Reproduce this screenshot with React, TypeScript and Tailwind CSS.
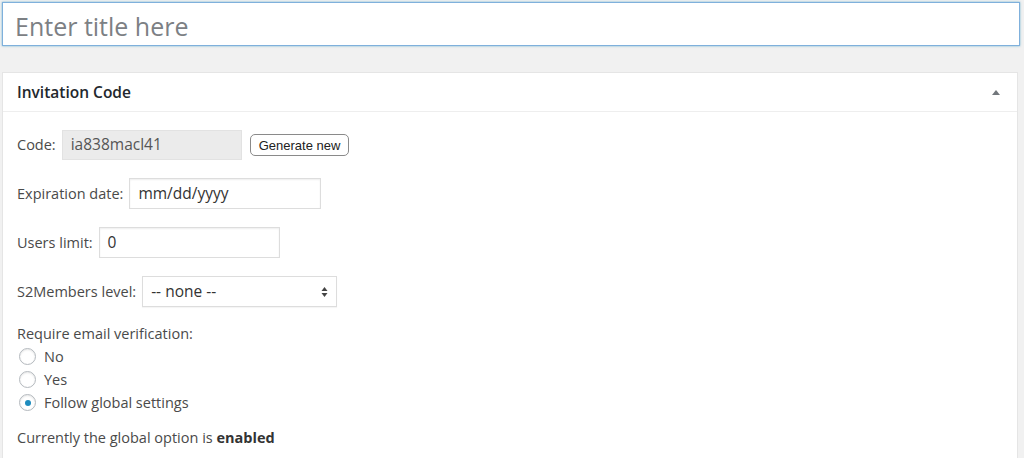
import { useState } from "react";

const font = { fontFamily: '"Open Sans", "Noto Sans", Arial, sans-serif' };

function Radio({ checked, label }: { checked?: boolean; label: string }) {
  return (
    <label className="flex h-[23px] items-center gap-[8px]">
      <span className="flex h-[17px] w-[17px] items-center justify-center rounded-full border border-[#b4b9be] bg-white shadow-[inset_0_1px_2px_rgba(0,0,0,0.1)]">
        {checked ? <span className="h-[6px] w-[6px] rounded-full bg-[#1e8cbe]" /> : null}
      </span>
      <span>{label}</span>
    </label>
  );
}

export default function App() {
  const [title, setTitle] = useState("");

  return (
    <div
      className="h-[458px] w-full overflow-hidden bg-[#f1f1f1] px-[2px] pt-[2px] text-[14.5px] text-[#4a4a4a]"
      style={font}
    >
      <input
        value={title}
        onChange={(e) => setTitle(e.target.value)}
        placeholder="Enter title here"
        className="block h-[44px] w-[1018px] border border-[#7fb0dc] bg-white px-[12px] pt-[3px] text-[25px] text-[#333] shadow-[0_0_2px_rgba(30,140,190,0.6)] outline-none placeholder:text-[#7c8084]"
      />

      <div className="mt-[26px] h-[420px] w-[1016px] border border-[#e5e5e5] bg-white">
        <div className="flex h-[39px] items-center justify-between border-b border-[#eee] pl-[14px] pr-[16px]">
          <div className="pt-[2px] text-[15.5px] font-semibold text-[#23282d]">Invitation Code</div>
          <svg width="10" height="8" viewBox="0 0 10 8">
            <path d="M1 7 L5 2 L9 7 Z" fill="#72777c" />
          </svg>
        </div>

        <div className="px-[14px] pt-[18px]">
          <div className="flex h-[30px] items-center gap-[6px]">
            <span>Code:</span>
            <div className="flex h-[30px] w-[180px] items-center border border-[#e2e2e2] bg-[#ebebeb] px-[8px] text-[15.5px] text-[#555]">
              ia838macl41
            </div>
            <button
              className="ml-[2px] h-[22px] rounded-[5px] border border-[#8a8a8a] bg-white px-[8px] text-[13px] leading-none text-[#222]"
              style={{ fontFamily: '"Liberation Sans", Arial, sans-serif' }}
            >
              Generate new
            </button>
          </div>

          <div className="mt-[18px] flex h-[31px] items-center gap-[6px]">
            <span>Expiration date:</span>
            <div className="flex h-[31px] w-[192px] items-center border border-[#ddd] bg-white px-[8px] text-[15.5px] text-[#333] shadow-[inset_0_1px_2px_rgba(0,0,0,0.07)]">
              mm/dd/yyyy
            </div>
          </div>

          <div className="mt-[18px] flex h-[31px] items-center gap-[6px]">
            <span>Users limit:</span>
            <div className="flex h-[31px] w-[181px] items-center border border-[#ddd] bg-white px-[8px] text-[15.5px] text-[#333] shadow-[inset_0_1px_2px_rgba(0,0,0,0.07)]">
              0
            </div>
          </div>

          <div className="mt-[18px] flex h-[31px] items-center gap-[6px]">
            <span>S2Members level:</span>
            <div className="flex h-[31px] w-[195px] items-center justify-between border border-[#ddd] bg-white pl-[8px] pr-[8px] text-[15.5px] text-[#333] shadow-[0_1px_1px_rgba(0,0,0,0.04)]">
              <span>-- none --</span>
              <svg width="7" height="12" viewBox="0 0 7 12">
                <path d="M0.5 5 L3.5 1 L6.5 5 Z M0.5 7 L3.5 11 L6.5 7 Z" fill="#444" />
              </svg>
            </div>
          </div>

          <div className="mt-[15px] leading-[23px]">Require email verification:</div>
          <div className="ml-[2px] flex flex-col">
            <Radio label="No" />
            <Radio label="Yes" />
            <Radio checked label="Follow global settings" />
          </div>

          <div className="mt-[12px] leading-[23px]">
            Currently the global option is <b className="font-bold text-[#333]">enabled</b>
          </div>
        </div>
      </div>
    </div>
  );
}
